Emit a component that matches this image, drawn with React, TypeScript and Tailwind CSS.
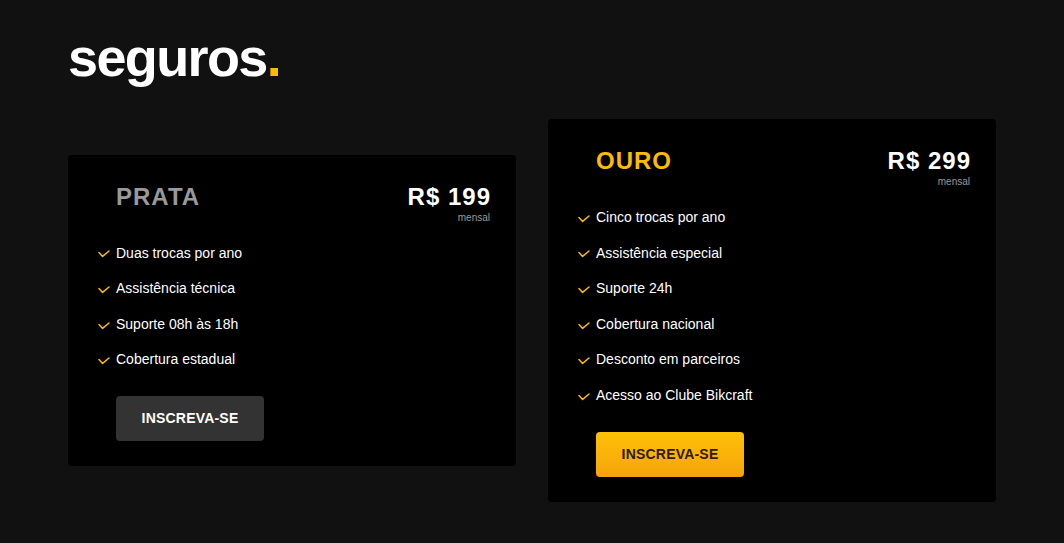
import React from "react";

type Plan = {
  name: string;
  nameClass: string;
  price: string;
  items: string[];
  gold: boolean;
};

const plans: Plan[] = [
  {
    name: "PRATA",
    nameClass: "text-[#999999]",
    price: "R$ 199",
    items: ["Duas trocas por ano", "Assistência técnica", "Suporte 08h às 18h", "Cobertura estadual"],
    gold: false,
  },
  {
    name: "OURO",
    nameClass: "text-[#ffbb00]",
    price: "R$ 299",
    items: [
      "Cinco trocas por ano",
      "Assistência especial",
      "Suporte 24h",
      "Cobertura nacional",
      "Desconto em parceiros",
      "Acesso ao Clube Bikcraft",
    ],
    gold: true,
  },
];

function Check() {
  return (
    <svg width="12" height="8" viewBox="0 0 12 8" className="mr-[6px] mt-[2px] shrink-0">
      <polyline points="1,2.6 4.6,6.4 11,1" fill="none" stroke="#ffbb00" strokeWidth="1.5" strokeLinecap="round" strokeLinejoin="round" />
    </svg>
  );
}

function Card({ plan }: { plan: Plan }) {
  return (
    <div className="rounded-[4px] bg-black pl-[30px] pr-[26px] pt-[30px] pb-[25px]">
      <div className="ml-[18px] flex items-start justify-between">
        <h3 className={`text-[24px] font-bold leading-none tracking-[1px] ${plan.nameClass}`}>{plan.name}</h3>
        <div className="flex flex-col items-end">
          <span className="text-[24px] font-bold leading-none tracking-[1px] text-white -mr-[1px]">{plan.price}</span>
          <span className="mt-[3px] text-[10px] leading-[12px] text-[#999999]">mensal</span>
        </div>
      </div>
      <ul className="mt-[20px] flex flex-col gap-4">
        {plan.items.map((it) => (
          <li key={it} className="flex items-center text-[14px] leading-[1.4] text-white">
            <Check />
            {it}
          </li>
        ))}
      </ul>
      <button
        className={
          plan.gold
            ? "ml-[18px] mt-[26px] flex h-[45px] w-[148px] items-center justify-center rounded-[4px] bg-gradient-to-b from-[#ffc107] to-[#f5a30a] text-[14px] font-bold tracking-[0.2px] text-[#2e1a00]"
            : "ml-[18px] mt-[26px] flex h-[45px] w-[148px] items-center justify-center rounded-[4px] bg-[#333333] text-[14px] font-bold tracking-[0.2px] text-white"
        }
      >
        INSCREVA-SE
      </button>
    </div>
  );
}

export default function App() {
  return (
    <div className="min-h-[543px] bg-[#111111] font-['Liberation_Sans',Arial,sans-serif]">
      <div className="mx-auto w-[928px] pt-[30px] pb-[41px]">
        <h1 className="text-[54px] font-bold leading-none tracking-[-0.03em] text-white">
          seguros<span className="text-[#ffbb00]">.</span>
        </h1>
        <div className="mt-[35px] grid grid-cols-2 items-center gap-8">
          {plans.map((p) => (
            <Card key={p.name} plan={p} />
          ))}
        </div>
      </div>
    </div>
  );
}
